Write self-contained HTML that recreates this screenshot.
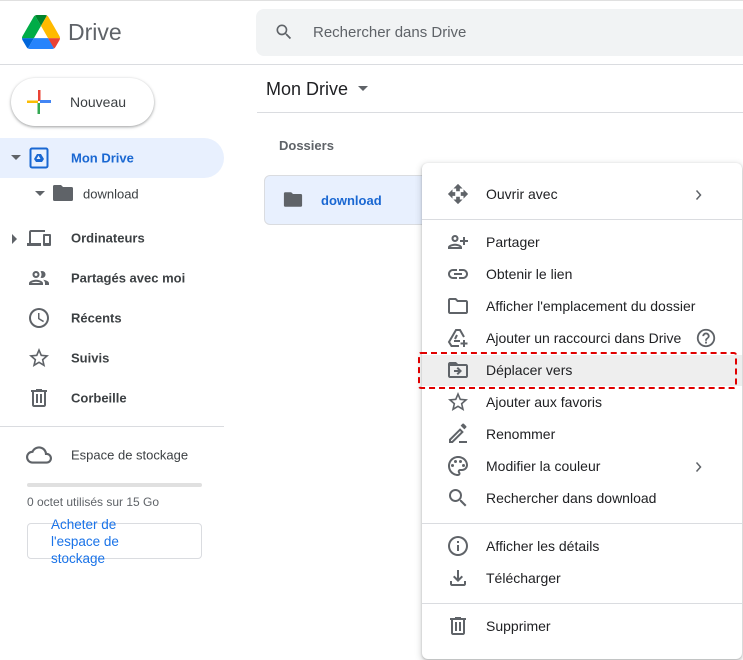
<!DOCTYPE html>
<html><head><meta charset="utf-8"><style>
*{box-sizing:border-box;margin:0;padding:0}
body{width:743px;height:660px;overflow:hidden;background:#fff;font-family:"Liberation Sans",Arial,sans-serif;position:relative;color:#3c4043}
.a{position:absolute}
.nav{position:absolute;left:71px;font-size:13px;font-weight:bold;color:#3c4043;transform:translateY(-50%)}
.ic{position:absolute;transform:translate(-50%,-50%)}
.mi{position:absolute;left:486px;font-size:14px;color:#202124;transform:translateY(-50%)}
.div{position:absolute;left:422px;width:320px;height:1px;background:#dadce0}
</style></head><body>
<div class="a" style="left:0;top:0;width:743px;height:1px;background:#e0e0e0"></div>
<svg class="a" style="left:21px;top:15px" width="40" height="34" viewBox="0 0 87.3 78"><path d="m6.6 66.85 3.85 6.65c.8 1.4 1.950 2.5 3.3 3.3l13.75-23.8h-27.5c0 1.55.4 3.1 1.2 4.5z" fill="#0066da"/><path d="m43.65 25-13.75-23.8c-1.35.8-2.5 1.9-3.3 3.3l-25.4 44a9.06 9.06 0 0 0 -1.2 4.5h27.5z" fill="#00ac47"/><path d="m73.55 76.8c1.35-.8 2.5-1.9 3.3-3.3l1.6-2.75 7.650-13.25c.8-1.4 1.2-2.95 1.2-4.5h-27.502l5.852 11.5z" fill="#ea4335"/><path d="m43.65 25 13.75-23.8c-1.35-.8-2.9-1.2-4.5-1.2h-18.5c-1.6 0-3.15.45-4.5 1.2z" fill="#00832d"/><path d="m59.8 53h-32.3l-13.75 23.8c1.35.8 2.9 1.2 4.5 1.2h50.8c1.6 0 3.15-.45 4.5-1.2z" fill="#2684fc"/><path d="m73.4 26.5-12.7-22c-.8-1.4-1.95-2.5-3.3-3.3l-13.75 23.8 16.15 28h27.45c0-1.55-.4-3.1-1.2-4.5z" fill="#ffba00"/></svg>
<div class="a" style="left:68px;top:19px;font-size:23px;color:#5f6368">Drive</div>
<div class="a" style="left:256px;top:9px;width:500px;height:47px;background:#f1f3f4;border-radius:8px"></div>
<svg class="a" style="left:274px;top:22px" width="20" height="20" viewBox="0 0 24 24"><path fill="#5f6368" d="M15.5 14h-.79l-.28-.27A6.47 6.47 0 0 0 16 9.5 6.5 6.5 0 1 0 9.5 16c1.61 0 3.09-.59 4.23-1.57l.27.28v.79l5 4.99L20.49 19zm-6 0C7.01 14 5 11.99 5 9.5S7.01 5 9.5 5 14 7.01 14 9.5 11.99 14 9.5 14"/></svg>
<div class="a" style="left:313px;top:24px;font-size:15px;color:#5f6368">Rechercher dans Drive</div>
<div class="a" style="left:0;top:64px;width:743px;height:1px;background:#dadce0"></div>
<div class="a" style="left:11px;top:78px;width:143px;height:48px;border-radius:24px;background:#fff;box-shadow:0 1px 3px rgba(60,64,67,.35),0 1px 2px rgba(60,64,67,.2)"></div>
<svg class="a" style="left:27px;top:90px" width="24" height="24" viewBox="0 0 24 24"><path fill="#ea4335" d="M11 0h2.5v11H11z"/><path fill="#4285f4" d="M13 10h11v3H13z"/><path fill="#34a853" d="M10.5 13H13v11h-2.5z"/><path fill="#fbbc04" d="M0 10.5h11V13H0z"/></svg>
<div class="a" style="left:70px;top:94px;font-size:14px;color:#3c4043">Nouveau</div>
<div class="a" style="left:0;top:138px;width:224px;height:40px;background:#e8f0fe;border-radius:0 20px 20px 0"></div>
<svg class="a" style="left:10px;top:153px" width="12" height="10"><path d="M1 2h10L6 7z" fill="#5f6368"/></svg>
<svg class="a" style="left:29px;top:147px" width="20" height="22" viewBox="0 0 20 22"><rect x="1.5" y="1.5" width="17" height="19" rx="1.5" fill="none" stroke="#1967d2" stroke-width="2"/><path d="M5 12l3-5h4l3 5-2 3H7z" fill="#1967d2"/><path d="M7.5 12l2-3.5 2 3.5z" fill="#e8f0fe"/></svg>
<div class="nav" style="top:158px;color:#1967d2">Mon Drive</div>
<svg class="a" style="left:34px;top:189px" width="12" height="10"><path d="M1 2h10L6 7z" fill="#5f6368"/></svg>
<svg class="a" style="left:52px;top:184px" width="22" height="18" viewBox="0 0 22 18"><path d="M9 1H2.5A1.5 1.5 0 0 0 1 2.5v13A1.5 1.5 0 0 0 2.5 17h17a1.5 1.5 0 0 0 1.5-1.5V4.5A1.5 1.5 0 0 0 19.5 3H11z" fill="#5f6368"/></svg>
<div class="nav" style="left:83px;top:194px;font-weight:normal;color:#3c4043">download</div>
<svg class="a" style="left:10px;top:233px" width="10" height="12"><path d="M2 1v10l5-5z" fill="#5f6368"/></svg>
<svg class="ic" style="left:39px;top:238px" width="24" height="24" viewBox="0 0 24 24"><path fill="#5f6368" d="M4 6h14V4H4c-1.1 0-2 .9-2 2v11H0v3h14v-3H4zm19 2h-6c-.55 0-1 .45-1 1v10c0 .55.45 1 1 1h6c.55 0 1-.45 1-1V9c0-.55-.45-1-1-1m-1 9h-4v-7h4z"/></svg>
<div class="nav" style="top:238px">Ordinateurs</div>
<svg class="ic" style="left:39px;top:278px" width="24" height="24" viewBox="0 0 24 24"><path fill="#5f6368" d="M9 13.75c-2.34 0-7 1.170-7 3.5V19h14v-1.75c0-2.33-4.66-3.5-7-3.5M4.34 17c.84-.58 2.870-1.25 4.66-1.25s3.82.67 4.66 1.25zM9 12c1.93 0 3.5-1.57 3.5-3.5S10.93 5 9 5 5.5 6.57 5.5 8.5 7.07 12 9 12m0-5c.83 0 1.5.67 1.5 1.5S9.83 10 9 10s-1.5-.67-1.5-1.5S8.17 7 9 7m7.04 6.81c1.16.84 1.96 1.96 1.96 3.44V19h4v-1.75c0-2.02-3.5-3.17-5.96-3.44M15 12c1.93 0 3.5-1.57 3.5-3.5S16.93 5 15 5c-.54 0-1.04.13-1.5.35.63.89 1 1.98 1 3.15s-.37 2.26-1 3.15c.46.22.96.35 1.5.35"/></svg>
<div class="nav" style="top:278px">Partagés avec moi</div>
<svg class="ic" style="left:39px;top:318px" width="24" height="24" viewBox="0 0 24 24"><path fill="#5f6368" d="M12 2a10 10 0 1 0 0 20 10 10 0 0 0 0-20m0 18a8 8 0 1 1 0-16 8 8 0 0 1 0 16m.5-13H11v6l5.2 3.2.8-1.3-4.5-2.7z"/></svg>
<div class="nav" style="top:318px">Récents</div>
<svg class="ic" style="left:39px;top:358px" width="24" height="24" viewBox="0 0 24 24"><path fill="#5f6368" d="m22 9.24-7.19-.62L12 2 9.19 8.63 2 9.24l5.46 4.73L5.82 21 12 17.27 18.18 21l-1.63-7.03zM12 15.4l-3.76 2.27 1-4.28-3.32-2.88 4.38-.38L12 6.1l1.71 4.04 4.38.38-3.32 2.88 1 4.28z"/></svg>
<div class="nav" style="top:358px">Suivis</div>
<svg class="ic" style="left:39px;top:398px" width="24" height="24" viewBox="0 0 24 24"><path fill="#5f6368" d="M15 4V3H9v1H4v2h1v13c0 1.1.9 2 2 2h10c1.1 0 2-.9 2-2V6h1V4zm2 15H7V6h10zM9 8h2v9H9zm4 0h2v9h-2z"/></svg>
<div class="nav" style="top:398px">Corbeille</div>
<div class="a" style="left:0;top:426px;width:224px;height:1px;background:#dadce0"></div>
<svg class="ic" style="left:39px;top:455px" width="26" height="26" viewBox="0 0 24 24"><path fill="#5f6368" d="M19.35 10.04A7.49 7.49 0 0 0 12 4C9.11 4 6.6 5.64 5.35 8.04A5.994 5.994 0 0 0 0 14c0 3.31 2.69 6 6 6h13c2.76 0 5-2.24 5-5 0-2.64-2.05-4.78-4.65-4.96M19 18H6c-2.21 0-4-1.79-4-4s1.79-4 4-4h.71C7.37 7.69 9.48 6 12 6c3.04 0 5.5 2.46 5.5 5.5v.5H19c1.66 0 3 1.34 3 3s-1.34 3-3 3"/></svg>
<div class="nav" style="top:455px;font-weight:normal;color:#3c4043">Espace de stockage</div>
<div class="a" style="left:27px;top:483px;width:175px;height:4px;background:#e0e0e0;border-radius:2px"></div>
<div class="a" style="left:27px;top:495px;font-size:12px;color:#5f6368">0 octet utilisés sur 15 Go</div>
<div class="a" style="left:27px;top:523px;width:175px;height:36px;border:1px solid #dadce0;border-radius:4px"></div>
<div class="a" style="left:51px;top:516px;width:110px;font-size:13.5px;line-height:17px;color:#1a73e8">Acheter de l'espace de stockage</div>

<div class="a" style="left:266px;top:79px;font-size:18px;color:#202124">Mon Drive</div>
<svg class="a" style="left:357px;top:85px" width="12" height="8"><path d="M1 1h10L6 6z" fill="#5f6368"/></svg>
<div class="a" style="left:257px;top:112px;width:486px;height:1px;background:#dadce0"></div>
<div class="a" style="left:279px;top:138px;font-size:13px;font-weight:bold;color:#5f6368">Dossiers</div>
<div class="a" style="left:264px;top:175px;width:170px;height:50px;background:#e8f0fe;border:1px solid #dadce0;border-radius:6px"></div>
<svg class="a" style="left:283px;top:191px" width="20" height="17" viewBox="0 0 22 18"><path d="M9 1H2.5A1.5 1.5 0 0 0 1 2.5v13A1.5 1.5 0 0 0 2.5 17h17a1.5 1.5 0 0 0 1.5-1.5V4.5A1.5 1.5 0 0 0 19.5 3H11z" fill="#5f6368"/></svg>
<div class="a" style="left:321px;top:193px;font-size:13px;font-weight:bold;color:#1967d2">download</div>

<div class="a" style="left:422px;top:163px;width:320px;height:496px;background:#fff;border-radius:6px;box-shadow:0 2px 6px 2px rgba(60,64,67,.15),0 1px 2px rgba(60,64,67,.3)"></div>
<div class="a" style="left:422px;top:355px;width:320px;height:31px;background:#eeeeee"></div>
<div class="a" style="left:418px;top:352px;width:319px;height:37px;border:2.5px dashed #e00000;border-radius:3px"></div>
<div class="div" style="top:219px"></div>
<div class="div" style="top:523px"></div>
<div class="div" style="top:603px"></div>
<svg class="a" style="left:447px;top:183px" width="22" height="22" viewBox="0 0 24 24"><path fill="#5f6368" d="M10 9h4V6h3l-5-5-5 5h3zm-1 1H6V7l-5 5 5 5v-3h3zm14 2-5-5v3h-3v4h3v3zm-9 3h-4v3H7l5 5 5-5h-3z"/></svg>
<div class="mi" style="top:194px">Ouvrir avec</div>
<svg class="a" style="left:695px;top:189px" width="8" height="12"><path d="M1.5 1.5l4 4.5-4 4.5" fill="none" stroke="#5f6368" stroke-width="1.5"/></svg>
<svg class="ic" style="left:458px;top:242px" width="24" height="24" viewBox="0 0 24 24"><path fill="#5f6368" d="M9 12c1.93 0 3.5-1.57 3.5-3.5S10.93 5 9 5 5.5 6.57 5.5 8.5 7.07 12 9 12m0-5c.83 0 1.5.67 1.5 1.5S9.83 10 9 10s-1.5-.67-1.5-1.5S8.17 7 9 7m0 6.75c-2.34 0-7 1.17-7 3.5V19h14v-1.75c0-2.33-4.66-3.5-7-3.5M4.34 17c.84-.58 2.87-1.25 4.66-1.25s3.82.67 4.66 1.25zM19 10V7h-2v3h-3v2h3v3h2v-3h3v-2z"/></svg>
<div class="mi" style="top:242px">Partager</div>
<svg class="ic" style="left:458px;top:274px" width="24" height="24" viewBox="0 0 24 24"><path fill="#5f6368" d="M17 7h-4v2h4c1.65 0 3 1.35 3 3s-1.35 3-3 3h-4v2h4c2.76 0 5-2.24 5-5s-2.24-5-5-5m-6 8H7c-1.65 0-3-1.35-3-3s1.35-3 3-3h4V7H7c-2.76 0-5 2.24-5 5s2.24 5 5 5h4zm-3-4h8v2H8z"/></svg>
<div class="mi" style="top:274px">Obtenir le lien</div>
<svg class="ic" style="left:458px;top:306px" width="24" height="24" viewBox="0 0 24 24"><path fill="#5f6368" d="M9.17 6l2 2H20v10H4V6zM10 4H4c-1.1 0-2 .9-2 2v12c0 1.1.9 2 2 2h16c1.1 0 2-.9 2-2V8c0-1.1-.9-2-2-2h-8z"/></svg>
<div class="mi" style="top:306px">Afficher l'emplacement du dossier</div>
<svg class="ic" style="left:458px;top:338px" width="24" height="24" viewBox="0 0 24 24"><path fill="none" stroke="#5f6368" stroke-width="2" d="M13 20H5.5L3 16 10 4h4l4 7"/><path fill="none" stroke="#5f6368" stroke-width="2" d="M8 15h6M9 13l2-4M18 14v7M14.5 17.5h7"/></svg>
<div class="mi" style="top:338px">Ajouter un raccourci dans Drive</div>
<svg class="ic" style="left:706px;top:338px" width="22" height="22" viewBox="0 0 24 24"><path fill="#5f6368" d="M11 18h2v-2h-2zm1-16a10 10 0 1 0 0 20 10 10 0 0 0 0-20m0 18a8 8 0 1 1 0-16 8 8 0 0 1 0 16m0-14c-2.21 0-4 1.79-4 4h2c0-1.1.9-2 2-2s2 .9 2 2c0 2-3 1.75-3 5h2c0-2.25 3-2.5 3-5 0-2.21-1.79-4-4-4"/></svg>
<svg class="ic" style="left:458px;top:370px" width="24" height="24" viewBox="0 0 24 24"><path fill="#5f6368" d="M20 6h-8l-2-2H4c-1.1 0-2 .9-2 2v12c0 1.1.9 2 2 2h16c1.1 0 2-.9 2-2V8c0-1.1-.9-2-2-2m0 12H4V8h16zm-7.84-6H8v2h4.16l-1.59 1.59L11.99 17 16 13.01 11.99 9l-1.41 1.41z"/></svg>
<div class="mi" style="top:370px">Déplacer vers</div>
<svg class="ic" style="left:458px;top:402px" width="24" height="24" viewBox="0 0 24 24"><path fill="#5f6368" d="m22 9.24-7.19-.62L12 2 9.19 8.63 2 9.24l5.46 4.73L5.82 21 12 17.27 18.18 21l-1.63-7.03zM12 15.4l-3.76 2.27 1-4.28-3.32-2.88 4.38-.38L12 6.1l1.71 4.04 4.38.38-3.32 2.88 1 4.28z"/></svg>
<div class="mi" style="top:402px">Ajouter aux favoris</div>
<svg class="ic" style="left:458px;top:434px" width="24" height="24" viewBox="0 0 24 24"><path fill="#5f6368" d="M13 19h8v2h-8zM3 21v-3.75L14.06 6.19l3.75 3.75L6.75 21zm2-2h.92l9.06-9.06-.92-.92L5 18.08zM18.37 7.36l-3.75-3.75 1.83-1.83c.39-.39 1.02-.39 1.41 0l2.34 2.34c.39.39.39 1.02 0 1.41z"/></svg>
<div class="mi" style="top:434px">Renommer</div>
<svg class="ic" style="left:458px;top:466px" width="24" height="24" viewBox="0 0 24 24"><path fill="#5f6368" d="M12 22C6.49 22 2 17.51 2 12S6.49 2 12 2s10 4.04 10 9c0 3.31-2.69 6-6 6h-1.77c-.28 0-.5.22-.5.5 0 .12.05.23.13.33.41.47.64 1.06.64 1.67A2.5 2.5 0 0 1 12 22m0-18c-4.41 0-8 3.59-8 8s3.59 8 8 8c.28 0 .5-.22.5-.5a.54.54 0 0 0-.14-.35c-.41-.46-.63-1.05-.63-1.65a2.5 2.5 0 0 1 2.5-2.5H16c2.21 0 4-1.79 4-4 0-3.86-3.59-7-8-7"/><circle fill="#5f6368" cx="6.5" cy="11.5" r="1.5"/><circle fill="#5f6368" cx="9.5" cy="7.5" r="1.5"/><circle fill="#5f6368" cx="14.5" cy="7.5" r="1.5"/><circle fill="#5f6368" cx="17.5" cy="11.5" r="1.5"/></svg>
<div class="mi" style="top:466px">Modifier la couleur</div>
<svg class="a" style="left:695px;top:461px" width="8" height="12"><path d="M1.5 1.5l4 4.5-4 4.5" fill="none" stroke="#5f6368" stroke-width="1.5"/></svg>
<svg class="ic" style="left:458px;top:498px" width="24" height="24" viewBox="0 0 24 24"><path fill="#5f6368" d="M15.5 14h-.79l-.28-.27A6.47 6.47 0 0 0 16 9.5 6.5 6.5 0 1 0 9.5 16c1.61 0 3.09-.59 4.23-1.57l.27.28v.79l5 4.99L20.49 19zm-6 0C7.01 14 5 11.99 5 9.5S7.01 5 9.5 5 14 7.01 14 9.5 11.99 14 9.5 14"/></svg>
<div class="mi" style="top:498px">Rechercher dans download</div>
<svg class="ic" style="left:458px;top:546px" width="24" height="24" viewBox="0 0 24 24"><path fill="#5f6368" d="M11 7h2v2h-2zm0 4h2v6h-2zm1-9a10 10 0 1 0 0 20 10 10 0 0 0 0-20m0 18a8 8 0 1 1 0-16 8 8 0 0 1 0 16"/></svg>
<div class="mi" style="top:546px">Afficher les détails</div>
<svg class="ic" style="left:458px;top:578px" width="24" height="24" viewBox="0 0 24 24"><path fill="#5f6368" d="M18 15v3H6v-3H4v3c0 1.1.9 2 2 2h12c1.1 0 2-.9 2-2v-3zm-1-4-1.41-1.41L13 12.17V4h-2v8.17L8.41 9.59 7 11l5 5z"/></svg>
<div class="mi" style="top:578px">Télécharger</div>
<svg class="ic" style="left:458px;top:626px" width="24" height="24" viewBox="0 0 24 24"><path fill="#5f6368" d="M15 4V3H9v1H4v2h1v13c0 1.1.9 2 2 2h10c1.1 0 2-.9 2-2V6h1V4zm2 15H7V6h10zM9 8h2v9H9zm4 0h2v9h-2z"/></svg>
<div class="mi" style="top:626px">Supprimer</div>
</body></html>
